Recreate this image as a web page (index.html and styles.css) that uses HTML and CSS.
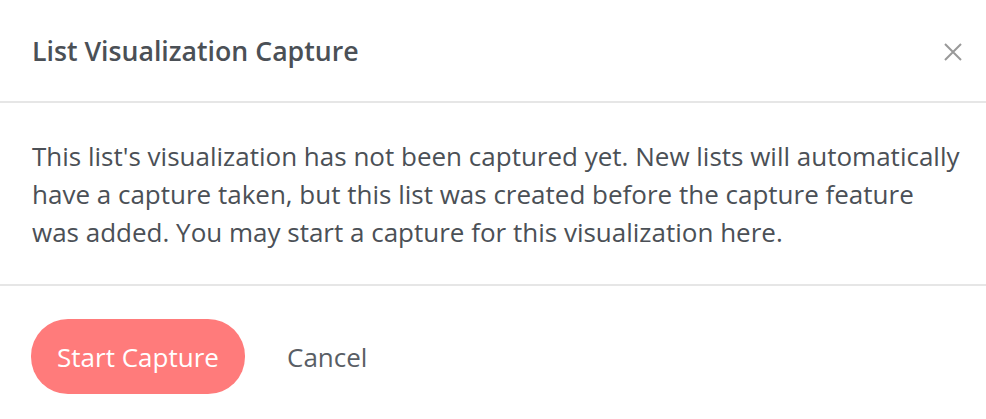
FILE: index.html
```html
<!DOCTYPE html>
<html>
<head>
<meta charset="utf-8">
<link rel="stylesheet" href="styles.css">
</head>
<body>
<div class="modal">
  <div class="modal-header">
    <h2 class="modal-title">List Visualization Capture</h2>
    <button class="close" aria-label="Close">
      <svg width="18" height="18" viewBox="0 0 18 18"><path d="M1 1L17 17M17 1L1 17" stroke="#999" stroke-width="2" fill="none"/></svg>
    </button>
  </div>
  <div class="modal-body">
    <p>This list's visualization has not been captured yet. New lists will automatically have a capture taken, but this list was created before the capture feature was added. You may start a capture for this visualization here.</p>
  </div>
  <div class="modal-footer">
    <button class="btn-primary">Start Capture</button>
    <button class="btn-link">Cancel</button>
  </div>
</div>
</body>
</html>
```

FILE: styles.css
```css
html, body {
  margin: 0;
  padding: 0;
  background: #fff;
}
body {
  font-family: "Open Sans", "Liberation Sans", sans-serif;
  color: #4b5056;
}
.modal {
  width: 986px;
  display: flex;
  flex-direction: column;
}
.modal-header {
  display: flex;
  align-items: center;
  justify-content: space-between;
  height: 103px;
  padding: 0 24px 0 32px;
  border-bottom: 2px solid #e6e6e6;
  box-sizing: border-box;
  flex-shrink: 0;
}
.modal-title {
  margin: 0;
  font-size: 26.7px;
  font-weight: 600;
  color: #4b5056;
}
.close {
  background: none;
  border: 0;
  padding: 0;
  width: 18px;
  height: 18px;
  display: flex;
  margin-top: 2px;
}
.modal-body {
  padding: 34px 20px 33px 32px;
  border-bottom: 2px solid #e6e6e6;
}
.modal-body p {
  margin: 0;
  font-size: 26px;
  line-height: 38px;
}
.modal-footer {
  display: flex;
  align-items: center;
  padding: 33px 31px;
  gap: 42px;
}
.btn-primary {
  font-family: inherit;
  font-size: 26px;
  color: #fff;
  background: #ff7b7b;
  border: 0;
  border-radius: 37px;
  height: 75px;
  width: 214px;
  padding: 0;
}
.btn-link {
  font-family: inherit;
  font-size: 26px;
  color: #595e65;
  background: none;
  border: 0;
  padding: 0;
}
```
